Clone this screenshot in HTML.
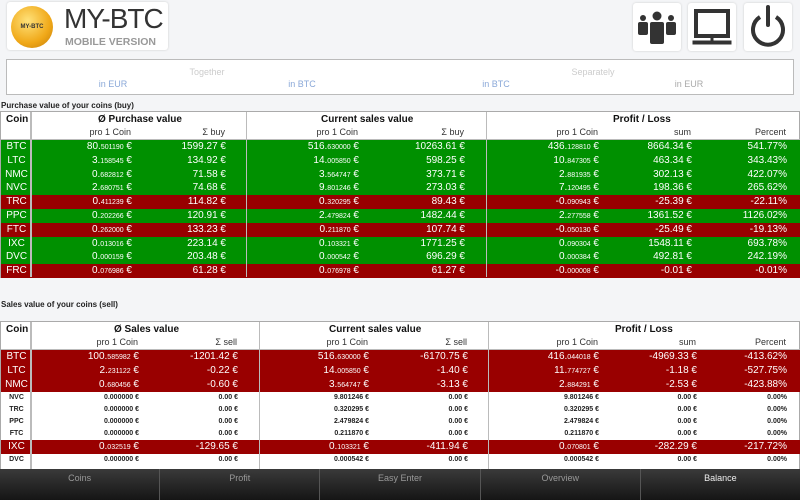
<!DOCTYPE html>
<html><head><meta charset="utf-8"><style>
*{margin:0;padding:0;box-sizing:border-box}
body{width:800px;height:500px;overflow:hidden;background:#f4f5f7;font-family:"Liberation Sans","DejaVu Sans",sans-serif;position:relative}
.abs{position:absolute}
.logo{left:7px;top:2px;width:161px;height:48px;background:#fff;border-radius:3px;box-shadow:0 0 2px #ccc}
.coin{left:4px;top:4px;width:42px;height:42px;border-radius:50%;background:radial-gradient(circle at 40% 35%,#ffe27a,#f0a818 60%,#c07a08);}
.coin b{position:absolute;left:8px;top:17px;width:26px;height:8px;font-size:6px;line-height:8px;text-align:center;color:#333}
.ib{top:3px;width:48px;height:48px;background:#fff;border-radius:3px;box-shadow:0 0 2px #ccc}
.box{left:6px;top:59px;width:788px;height:36px;background:#fff;border:1px solid #bbb}
.tg{font-size:9px;color:#ccc;transform:translateX(-50%)}
.lk{font-size:9px;color:#8aa8d8;transform:translateX(-50%)}
.lbl{font-size:8px;color:#222;left:1px;font-weight:bold}
.tbl{left:0;width:800px;border:1px solid #aaa;background:#fff}
.h{position:absolute;font-size:10px;color:#111;font-weight:bold}
.sh{position:absolute;font-size:9px;color:#333}
.vl{position:absolute;width:2px;background:#bbb}
.row{position:absolute;left:0;width:800px;color:#fff;font-size:10px}
.row span{position:absolute;top:0}
.row .c{left:0;width:31px;text-align:center}
.g{background:#009000}.r{background:#990000}
.w{color:#222;font-size:7px;font-weight:bold}
small{font-size:7px}
.t1 .a1{right:669px}.t1 .a2{right:575px}.t1 .a3{right:442px}.t1 .a4{right:336px}.t1 .a5{right:202px}.t1 .a6{right:109px}.t1 .a7{right:14px}
.t2 .a1{right:662px}.t2 .a2{right:563px}.t2 .a3{right:432px}.t2 .a4{right:333px}.t2 .a5{right:202px}.t2 .a6{right:104px}.t2 .a7{right:14px}
.t1 .row{height:14px;line-height:14px}
.nav{left:0;top:469px;width:800px;height:31px;display:flex}
.nav div{flex:1;background:linear-gradient(#3a3a3a,#151515);border-left:1px solid #555;color:#999;font-size:9px;text-align:center;padding-top:4px}
</style></head><body>
<div class="abs logo"><div class="abs coin"><b>MY-BTC</b></div>
<div class="abs" style="left:57px;top:1px;font-size:28px;color:#333;letter-spacing:-1px">MY-BTC</div>
<div class="abs" style="left:58px;top:34px;font-size:10.5px;color:#999;font-weight:bold">MOBILE VERSION</div></div>
<div class="abs ib" style="left:633px"><svg width="48" height="48" viewBox="0 0 48 48" fill="#333"><circle cx="10" cy="15" r="3"/><circle cx="38" cy="15" r="3"/><circle cx="24" cy="13" r="4.5"/><rect x="5" y="19" width="10" height="13" rx="2"/><rect x="33" y="19" width="10" height="13" rx="2"/><rect x="17" y="19" width="14" height="22" rx="2"/></svg></div>
<div class="abs ib" style="left:688px"><svg width="48" height="48" viewBox="0 0 48 48" fill="none" stroke="#333"><rect x="8" y="8" width="32" height="25" stroke-width="4"/><line x1="24" y1="33" x2="24" y2="38" stroke-width="3"/><rect x="5" y="38" width="38" height="3" fill="#333"/></svg></div>
<div class="abs ib" style="left:744px"><svg width="48" height="48" viewBox="0 0 48 48" fill="none" stroke="#333" stroke-width="4"><path d="M16 14 A15 15 0 1 0 32 14"/><line x1="24" y1="4" x2="24" y2="22" stroke-linecap="round"/></svg></div>
<div class="abs box"></div>
<div class="abs tg" style="left:207px;top:67px">Together</div>
<div class="abs tg" style="left:593px;top:67px">Separately</div>
<div class="abs lk" style="left:113px;top:79px">in EUR</div>
<div class="abs lk" style="left:302px;top:79px">in BTC</div>
<div class="abs lk" style="left:496px;top:79px">in BTC</div>
<div class="abs lk" style="left:689px;top:79px;color:#aaa">in EUR</div>

<div class="abs lbl" style="top:101px">Purchase value of your coins (buy)</div>
<div class="abs tbl t1" style="top:111px;height:167px">
<div class="h" style="left:5px;top:2px">Coin</div>
<div class="h" style="left:97px;top:2px">Ø Purchase value</div>
<div class="h" style="left:320px;top:2px">Current sales value</div>
<div class="h" style="left:612px;top:2px">Profit / Loss</div>
<div class="sh" style="right:668px;top:15px">pro 1 Coin</div><div class="sh" style="right:574px;top:15px">Σ buy</div>
<div class="sh" style="right:441px;top:15px">pro 1 Coin</div><div class="sh" style="right:335px;top:15px">Σ buy</div>
<div class="sh" style="right:201px;top:15px">pro 1 Coin</div><div class="sh" style="right:108px;top:15px">sum</div><div class="sh" style="right:13px;top:15px">Percent</div>
<div class="abs" style="left:0;top:27px;width:800px;height:1px;background:#bbb"></div>
<div class="row g" style="top:28px"><span class="c">BTC</span><span class="a1">80.<small>501190</small> €</span><span class="a2">1599.27 €</span><span class="a3">516.<small>630000</small> €</span><span class="a4">10263.61 €</span><span class="a5">436.<small>128810</small> €</span><span class="a6">8664.34 €</span><span class="a7">541.77%</span></div>
<div class="row g" style="top:41.8px"><span class="c">LTC</span><span class="a1">3.<small>158545</small> €</span><span class="a2">134.92 €</span><span class="a3">14.<small>005850</small> €</span><span class="a4">598.25 €</span><span class="a5">10.<small>847305</small> €</span><span class="a6">463.34 €</span><span class="a7">343.43%</span></div>
<div class="row g" style="top:55.6px"><span class="c">NMC</span><span class="a1">0.<small>682812</small> €</span><span class="a2">71.58 €</span><span class="a3">3.<small>564747</small> €</span><span class="a4">373.71 €</span><span class="a5">2.<small>881935</small> €</span><span class="a6">302.13 €</span><span class="a7">422.07%</span></div>
<div class="row g" style="top:69.4px"><span class="c">NVC</span><span class="a1">2.<small>680751</small> €</span><span class="a2">74.68 €</span><span class="a3">9.<small>801246</small> €</span><span class="a4">273.03 €</span><span class="a5">7.<small>120495</small> €</span><span class="a6">198.36 €</span><span class="a7">265.62%</span></div>
<div class="row r" style="top:83.2px"><span class="c">TRC</span><span class="a1">0.<small>411239</small> €</span><span class="a2">114.82 €</span><span class="a3">0.<small>320295</small> €</span><span class="a4">89.43 €</span><span class="a5">-0.<small>090943</small> €</span><span class="a6">-25.39 €</span><span class="a7">-22.11%</span></div>
<div class="row g" style="top:97px"><span class="c">PPC</span><span class="a1">0.<small>202266</small> €</span><span class="a2">120.91 €</span><span class="a3">2.<small>479824</small> €</span><span class="a4">1482.44 €</span><span class="a5">2.<small>277558</small> €</span><span class="a6">1361.52 €</span><span class="a7">1126.02%</span></div>
<div class="row r" style="top:110.8px"><span class="c">FTC</span><span class="a1">0.<small>262000</small> €</span><span class="a2">133.23 €</span><span class="a3">0.<small>211870</small> €</span><span class="a4">107.74 €</span><span class="a5">-0.<small>050130</small> €</span><span class="a6">-25.49 €</span><span class="a7">-19.13%</span></div>
<div class="row g" style="top:124.6px"><span class="c">IXC</span><span class="a1">0.<small>013016</small> €</span><span class="a2">223.14 €</span><span class="a3">0.<small>103321</small> €</span><span class="a4">1771.25 €</span><span class="a5">0.<small>090304</small> €</span><span class="a6">1548.11 €</span><span class="a7">693.78%</span></div>
<div class="row g" style="top:138.4px"><span class="c">DVC</span><span class="a1">0.<small>000159</small> €</span><span class="a2">203.48 €</span><span class="a3">0.<small>000542</small> €</span><span class="a4">696.29 €</span><span class="a5">0.<small>000384</small> €</span><span class="a6">492.81 €</span><span class="a7">242.19%</span></div>
<div class="row r" style="top:152.2px"><span class="c">FRC</span><span class="a1">0.<small>076986</small> €</span><span class="a2">61.28 €</span><span class="a3">0.<small>076978</small> €</span><span class="a4">61.27 €</span><span class="a5">-0.<small>000008</small> €</span><span class="a6">-0.01 €</span><span class="a7">-0.01%</span></div>
<div class="vl" style="left:29px;top:0;height:165px"></div>
<div class="vl" style="left:245px;top:0;height:165px;width:1px"></div>
<div class="vl" style="left:485px;top:0;height:165px;width:1px"></div>
</div>

<div class="abs lbl" style="top:300px">Sales value of your coins (sell)</div>
<div class="abs tbl t2" style="top:321px;height:150px;border-bottom:none">
<div class="h" style="left:5px;top:2px">Coin</div>
<div class="h" style="left:113px;top:2px">Ø Sales value</div>
<div class="h" style="left:328px;top:2px">Current sales value</div>
<div class="h" style="left:614px;top:2px">Profit / Loss</div>
<div class="sh" style="right:661px;top:15px">pro 1 Coin</div><div class="sh" style="right:562px;top:15px">Σ sell</div>
<div class="sh" style="right:431px;top:15px">pro 1 Coin</div><div class="sh" style="right:332px;top:15px">Σ sell</div>
<div class="sh" style="right:201px;top:15px">pro 1 Coin</div><div class="sh" style="right:103px;top:15px">sum</div><div class="sh" style="right:13px;top:15px">Percent</div>
<div class="abs" style="left:0;top:27px;width:800px;height:1px;background:#bbb"></div>
<div class="row r" style="top:28px;height:14px;line-height:14px"><span class="c">BTC</span><span class="a1">100.<small>585982</small> €</span><span class="a2">-1201.42 €</span><span class="a3">516.<small>630000</small> €</span><span class="a4">-6170.75 €</span><span class="a5">416.<small>044018</small> €</span><span class="a6">-4969.33 €</span><span class="a7">-413.62%</span></div>
<div class="row r" style="top:42px;height:14px;line-height:14px"><span class="c">LTC</span><span class="a1">2.<small>231122</small> €</span><span class="a2">-0.22 €</span><span class="a3">14.<small>005850</small> €</span><span class="a4">-1.40 €</span><span class="a5">11.<small>774727</small> €</span><span class="a6">-1.18 €</span><span class="a7">-527.75%</span></div>
<div class="row r" style="top:56px;height:14px;line-height:14px"><span class="c">NMC</span><span class="a1">0.<small>680456</small> €</span><span class="a2">-0.60 €</span><span class="a3">3.<small>564747</small> €</span><span class="a4">-3.13 €</span><span class="a5">2.<small>884291</small> €</span><span class="a6">-2.53 €</span><span class="a7">-423.88%</span></div>
<div class="row w" style="top:70px;height:12px;line-height:12px"><span class="c">NVC</span><span class="a1">0.000000 €</span><span class="a2">0.00 €</span><span class="a3">9.801246 €</span><span class="a4">0.00 €</span><span class="a5">9.801246 €</span><span class="a6">0.00 €</span><span class="a7">0.00%</span></div>
<div class="row w" style="top:82px;height:12px;line-height:12px"><span class="c">TRC</span><span class="a1">0.000000 €</span><span class="a2">0.00 €</span><span class="a3">0.320295 €</span><span class="a4">0.00 €</span><span class="a5">0.320295 €</span><span class="a6">0.00 €</span><span class="a7">0.00%</span></div>
<div class="row w" style="top:94px;height:12px;line-height:12px"><span class="c">PPC</span><span class="a1">0.000000 €</span><span class="a2">0.00 €</span><span class="a3">2.479824 €</span><span class="a4">0.00 €</span><span class="a5">2.479824 €</span><span class="a6">0.00 €</span><span class="a7">0.00%</span></div>
<div class="row w" style="top:106px;height:12px;line-height:12px"><span class="c">FTC</span><span class="a1">0.000000 €</span><span class="a2">0.00 €</span><span class="a3">0.211870 €</span><span class="a4">0.00 €</span><span class="a5">0.211870 €</span><span class="a6">0.00 €</span><span class="a7">0.00%</span></div>
<div class="row r" style="top:118px;height:14px;line-height:14px"><span class="c">IXC</span><span class="a1">0.<small>032519</small> €</span><span class="a2">-129.65 €</span><span class="a3">0.<small>103321</small> €</span><span class="a4">-411.94 €</span><span class="a5">0.<small>070801</small> €</span><span class="a6">-282.29 €</span><span class="a7">-217.72%</span></div>
<div class="row w" style="top:132px;height:12px;line-height:12px"><span class="c">DVC</span><span class="a1">0.000000 €</span><span class="a2">0.00 €</span><span class="a3">0.000542 €</span><span class="a4">0.00 €</span><span class="a5">0.000542 €</span><span class="a6">0.00 €</span><span class="a7">0.00%</span></div>
<div class="vl" style="left:29px;top:0;height:150px"></div>
<div class="vl" style="left:258px;top:0;height:150px;width:1px"></div>
<div class="vl" style="left:487px;top:0;height:150px;width:1px"></div>
</div>

<div class="abs nav"><div style="border-left:none">Coins</div><div>Profit</div><div>Easy Enter</div><div>Overview</div><div style="color:#eee">Balance</div></div>
</body></html>
